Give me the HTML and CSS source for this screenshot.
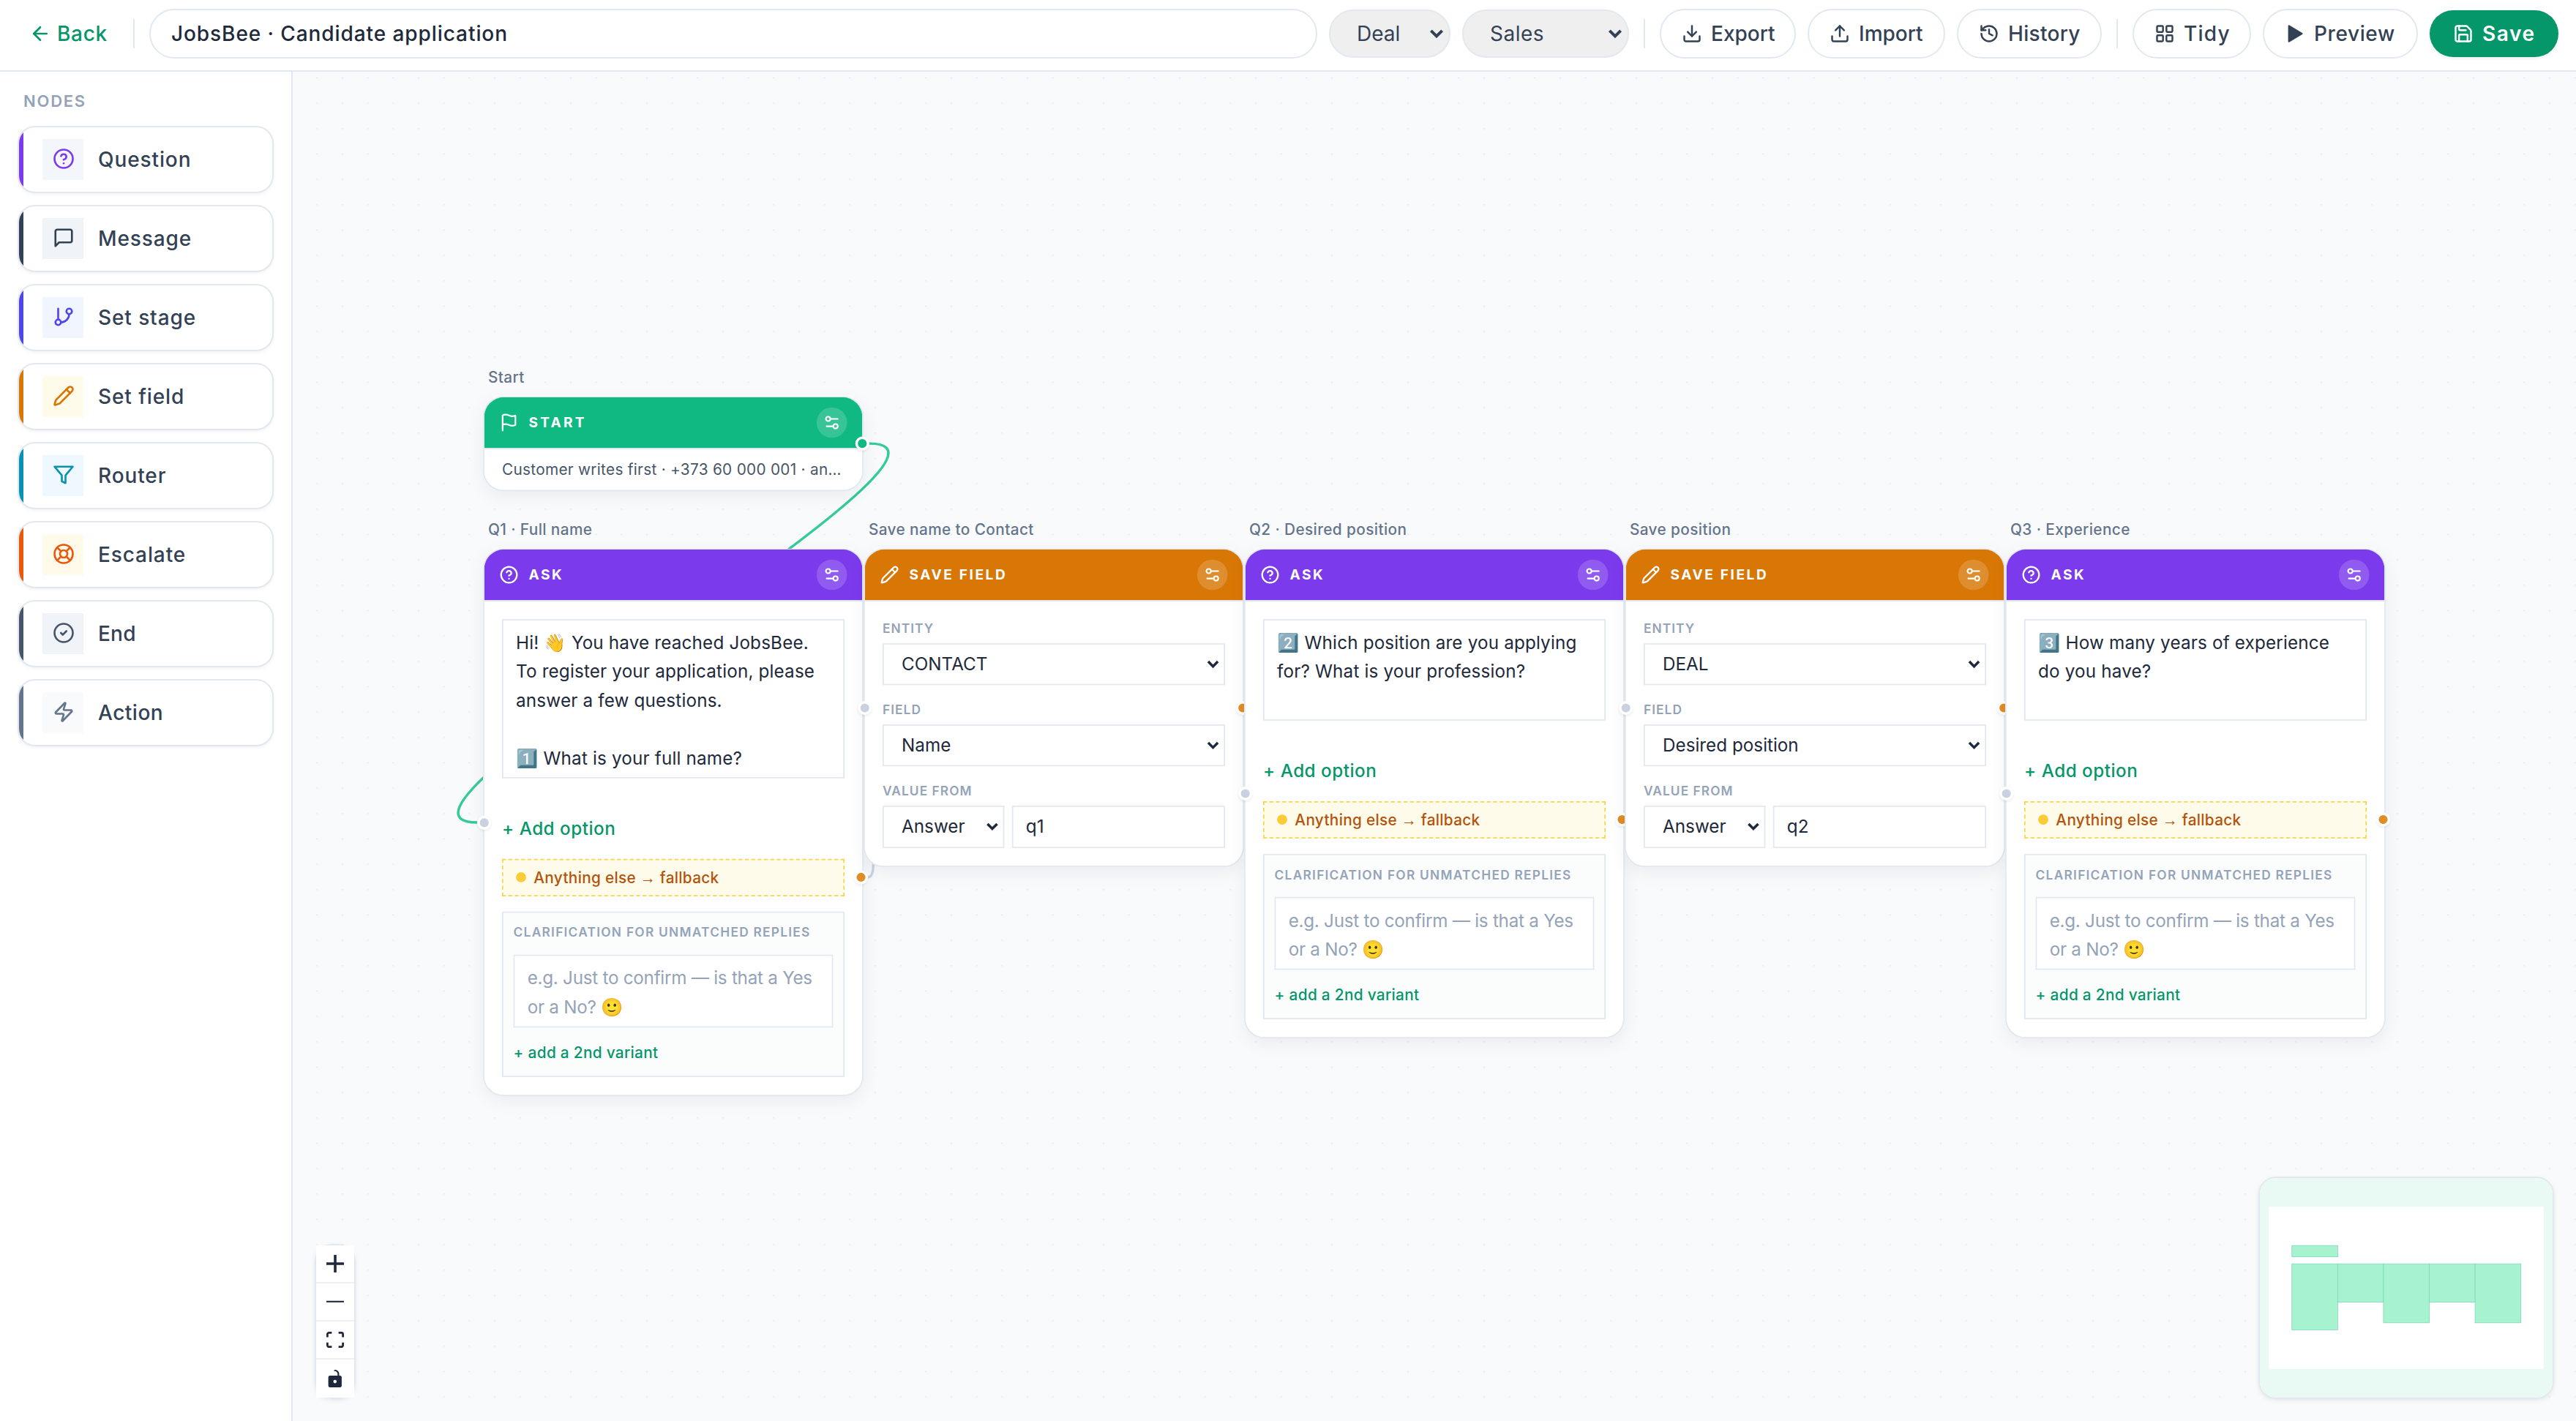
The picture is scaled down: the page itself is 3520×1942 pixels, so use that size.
FILE: index.html
```html
<!DOCTYPE html>
<html lang="en">
  <head>
    <meta charset="UTF-8" />
    <meta name="viewport" content="width=device-width, initial-scale=1.0" />
    <title>JobsBee · Candidate application</title>
    <link rel="stylesheet" href="styles.css">
  </head>
  <body>
    <svg class="sprite" aria-hidden="true">
      <symbol id="i-back" viewBox="0 0 24 24"><path d="m12 19-7-7 7-7"/><path d="M19 12H5"/></symbol>
      <symbol id="i-export" viewBox="0 0 24 24"><path d="M21 15v4a2 2 0 0 1-2 2H5a2 2 0 0 1-2-2v-4"/><path d="m7 10 5 5 5-5"/><path d="M12 15V3"/></symbol>
      <symbol id="i-import" viewBox="0 0 24 24"><path d="M21 15v4a2 2 0 0 1-2 2H5a2 2 0 0 1-2-2v-4"/><path d="m17 8-5-5-5 5"/><path d="M12 3v12"/></symbol>
      <symbol id="i-history" viewBox="0 0 24 24"><path d="M3 12a9 9 0 1 0 9-9 9.75 9.75 0 0 0-6.74 2.74L3 8"/><path d="M3 3v5h5"/><path d="M12 7v5l4 2"/></symbol>
      <symbol id="i-tidy" viewBox="0 0 24 24"><rect width="7" height="7" x="3" y="3" rx="1"/><rect width="7" height="7" x="14" y="3" rx="1"/><rect width="7" height="7" x="14" y="14" rx="1"/><rect width="7" height="7" x="3" y="14" rx="1"/></symbol>
      <symbol id="i-play" viewBox="0 0 24 24"><path d="M5 3l15 9-15 9z" fill="currentColor"/></symbol>
      <symbol id="i-save" viewBox="0 0 24 24"><path d="M15.2 3a2 2 0 0 1 1.4.6l3.8 3.8a2 2 0 0 1 .6 1.4V19a2 2 0 0 1-2 2H5a2 2 0 0 1-2-2V5a2 2 0 0 1 2-2z"/><path d="M17 21v-7a1 1 0 0 0-1-1H8a1 1 0 0 0-1 1v7"/><path d="M7 3v4a1 1 0 0 0 1 1h7"/></symbol>
      <symbol id="i-question" viewBox="0 0 24 24"><circle cx="12" cy="12" r="10"/><path d="M9.09 9a3 3 0 0 1 5.83 1c0 2-3 3-3 3"/><path d="M12 17h.01"/></symbol>
      <symbol id="i-message" viewBox="0 0 24 24"><path d="M21 15a2 2 0 0 1-2 2H7l-4 4V5a2 2 0 0 1 2-2h14a2 2 0 0 1 2 2z"/></symbol>
      <symbol id="i-stage" viewBox="0 0 24 24"><path d="M6 3v12"/><circle cx="18" cy="6" r="3"/><circle cx="6" cy="18" r="3"/><path d="M18 9a9 9 0 0 1-9 9"/></symbol>
      <symbol id="i-pencil" viewBox="0 0 24 24"><path d="M21.174 6.812a1 1 0 0 0-3.986-3.987L3.842 16.174a2 2 0 0 0-.5.83l-1.321 4.352a.5.5 0 0 0 .623.622l4.353-1.32a2 2 0 0 0 .83-.497z"/><path d="m15 5 4 4"/></symbol>
      <symbol id="i-router" viewBox="0 0 24 24"><path d="M22 3H2l8 9.46V19l4 2v-8.54z"/></symbol>
      <symbol id="i-escalate" viewBox="0 0 24 24"><circle cx="12" cy="12" r="10"/><path d="m4.93 4.93 4.24 4.24"/><path d="m14.83 9.17 4.24-4.24"/><path d="m14.83 14.83 4.24 4.24"/><path d="m9.17 14.83-4.24 4.24"/><circle cx="12" cy="12" r="4"/></symbol>
      <symbol id="i-end" viewBox="0 0 24 24"><circle cx="12" cy="12" r="10"/><path d="m9 12 2 2 4-4"/></symbol>
      <symbol id="i-action" viewBox="0 0 24 24"><path d="M4 14a1 1 0 0 1-.78-1.63l9.9-10.2a.5.5 0 0 1 .86.46l-1.92 6.02A1 1 0 0 0 13 10h7a1 1 0 0 1 .78 1.63l-9.9 10.2a.5.5 0 0 1-.86-.46l1.92-6.02A1 1 0 0 0 11 14z"/></symbol>
      <symbol id="i-flag" viewBox="0 0 24 24"><path d="M4 15s1-1 4-1 5 2 8 2 4-1 4-1V3s-1 1-4 1-5-2-8-2-4 1-4 1z"/><path d="M4 22v-7"/></symbol>
      <symbol id="i-tune" viewBox="0 0 24 24"><path d="M20 7h-9"/><path d="M14 17H5"/><circle cx="17" cy="17" r="3"/><circle cx="7" cy="7" r="3"/></symbol>
    </svg>

    <div class="app">
      <header class="topbar">
        <button class="back"><svg class="icon"><use href="#i-back"/></svg>Back</button>
        <span class="divider"></span>
        <input class="flow-name" type="text" value="JobsBee · Candidate application" />
        <select class="pick pick-entity"><option>Deal</option></select>
        <select class="pick pick-pipeline"><option>Sales</option></select>
        <span class="divider"></span>
        <button class="btn btn-export"><svg class="icon"><use href="#i-export"/></svg>Export</button>
        <button class="btn btn-import"><svg class="icon"><use href="#i-import"/></svg>Import</button>
        <button class="btn btn-history"><svg class="icon"><use href="#i-history"/></svg>History</button>
        <span class="divider"></span>
        <button class="btn btn-tidy"><svg class="icon"><use href="#i-tidy"/></svg>Tidy</button>
        <button class="btn btn-preview"><svg class="icon"><use href="#i-play"/></svg>Preview</button>
        <button class="btn btn-save"><svg class="icon"><use href="#i-save"/></svg>Save</button>
      </header>

      <main class="main">
        <aside class="sidebar">
          <h2 class="sidebar-title">Nodes</h2>
          <div class="palette">
            <div class="item question"><span class="item-icon"><svg class="icon"><use href="#i-question"/></svg></span>Question</div>
            <div class="item message"><span class="item-icon"><svg class="icon"><use href="#i-message"/></svg></span>Message</div>
            <div class="item stage"><span class="item-icon"><svg class="icon"><use href="#i-stage"/></svg></span>Set stage</div>
            <div class="item field"><span class="item-icon"><svg class="icon"><use href="#i-pencil"/></svg></span>Set field</div>
            <div class="item router"><span class="item-icon"><svg class="icon"><use href="#i-router"/></svg></span>Router</div>
            <div class="item escalate"><span class="item-icon"><svg class="icon"><use href="#i-escalate"/></svg></span>Escalate</div>
            <div class="item end"><span class="item-icon"><svg class="icon"><use href="#i-end"/></svg></span>End</div>
            <div class="item action"><span class="item-icon"><svg class="icon"><use href="#i-action"/></svg></span>Action</div>
          </div>
        </aside>

        <section class="canvas">
          <svg class="dots">
            <pattern id="dots" x="7.99" y="-4.49" width="17.3333" height="17.3333" patternUnits="userSpaceOnUse">
              <circle cx="8.67" cy="8.67" r="0.55" fill="#e2e7ee"/>
            </pattern>
            <rect width="100%" height="100%" fill="url(#dots)"/>
          </svg>

          <div class="viewport">
            <svg class="edges">
              <path class="edge" d="M303.4 379 C321 379 278 245 295.5 245"/>
              <path class="edge" d="M604.5 245 C623 245 577 313 595.5 313"/>
              <path class="edge" d="M903.4 333 C921 333 878 245 895.5 245"/>
              <path class="edge" d="M1204.5 245 C1223 245 1177 313 1195.5 313"/>
              <path class="edge edge-start" d="M304.5 37 C414.3 37 -114.3 335.75 -4.5 335.75"/>
            </svg>

            <article class="node node-start" style="left: 0; top: 0">
              <span class="node-name">Start</span>
              <div class="node-head"><svg class="icon"><use href="#i-flag"/></svg>Start<span class="tune"><svg class="icon"><use href="#i-tune"/></svg></span></div>
              <div class="node-summary">Customer writes first · +373 60 000 001 · an…</div>
              <i class="handle out"></i>
            </article>

            <article class="node node-ask" style="left: 0; top: 120px">
              <span class="node-name">Q1 · Full name</span>
              <div class="node-head"><svg class="icon"><use href="#i-question"/></svg>Ask<span class="tune"><svg class="icon"><use href="#i-tune"/></svg></span></div>
              <div class="node-body">
                <textarea class="text tall">Hi! 👋 You have reached JobsBee. To register your application, please answer a few questions.

1️⃣ What is your full name?</textarea>
                <button class="add-option">+ Add option</button>
                <div class="fallback"><i class="dot"></i><span>Anything else <span class="arrow">→</span> fallback</span><i class="handle"></i></div>
                <div class="clarify">
                  <span class="caption">Clarification for unmatched replies</span>
                  <textarea class="text short" placeholder="e.g. Just to confirm — is that a Yes or a No? 🙂"></textarea>
                  <button class="add-variant">+ add a 2nd variant</button>
                </div>
              </div>
              <i class="handle in"></i>
            </article>

            <article class="node node-save" style="left: 300px; top: 120px">
              <span class="node-name">Save name to Contact</span>
              <div class="node-head"><svg class="icon"><use href="#i-pencil"/></svg>Save field<span class="tune"><svg class="icon"><use href="#i-tune"/></svg></span></div>
              <div class="node-body">
                <label class="group"><span class="caption">Entity</span><select class="control"><option>CONTACT</option></select></label>
                <label class="group"><span class="caption">Field</span><select class="control"><option>Name</option></select></label>
                <div class="group">
                  <span class="caption">Value from</span>
                  <div class="pair"><select class="control source"><option>Answer</option></select><input class="control key" type="text" value="q1" /></div>
                </div>
              </div>
              <i class="handle in"></i>
              <i class="handle out"></i>
            </article>

            <article class="node node-ask" style="left: 600px; top: 120px">
              <span class="node-name">Q2 · Desired position</span>
              <div class="node-head"><svg class="icon"><use href="#i-question"/></svg>Ask<span class="tune"><svg class="icon"><use href="#i-tune"/></svg></span></div>
              <div class="node-body">
                <textarea class="text">2️⃣ Which position are you applying for? What is your profession?</textarea>
                <button class="add-option">+ Add option</button>
                <div class="fallback"><i class="dot"></i><span>Anything else <span class="arrow">→</span> fallback</span><i class="handle"></i></div>
                <div class="clarify">
                  <span class="caption">Clarification for unmatched replies</span>
                  <textarea class="text short" placeholder="e.g. Just to confirm — is that a Yes or a No? 🙂"></textarea>
                  <button class="add-variant">+ add a 2nd variant</button>
                </div>
              </div>
              <i class="handle in"></i>
            </article>

            <article class="node node-save" style="left: 900px; top: 120px">
              <span class="node-name">Save position</span>
              <div class="node-head"><svg class="icon"><use href="#i-pencil"/></svg>Save field<span class="tune"><svg class="icon"><use href="#i-tune"/></svg></span></div>
              <div class="node-body">
                <label class="group"><span class="caption">Entity</span><select class="control"><option>DEAL</option></select></label>
                <label class="group"><span class="caption">Field</span><select class="control"><option>Desired position</option></select></label>
                <div class="group">
                  <span class="caption">Value from</span>
                  <div class="pair"><select class="control source"><option>Answer</option></select><input class="control key" type="text" value="q2" /></div>
                </div>
              </div>
              <i class="handle in"></i>
              <i class="handle out"></i>
            </article>

            <article class="node node-ask" style="left: 1200px; top: 120px">
              <span class="node-name">Q3 · Experience</span>
              <div class="node-head"><svg class="icon"><use href="#i-question"/></svg>Ask<span class="tune"><svg class="icon"><use href="#i-tune"/></svg></span></div>
              <div class="node-body">
                <textarea class="text">3️⃣ How many years of experience do you have?</textarea>
                <button class="add-option">+ Add option</button>
                <div class="fallback"><i class="dot"></i><span>Anything else <span class="arrow">→</span> fallback</span><i class="handle"></i></div>
                <div class="clarify">
                  <span class="caption">Clarification for unmatched replies</span>
                  <textarea class="text short" placeholder="e.g. Just to confirm — is that a Yes or a No? 🙂"></textarea>
                  <button class="add-variant">+ add a 2nd variant</button>
                </div>
              </div>
              <i class="handle in"></i>
            </article>
          </div>

          <div class="controls">
            <button title="zoom in"><svg viewBox="0 0 32 32"><path d="M32 18.4H18.4V32h-4.8V18.4H0v-4.8h13.6V0h4.8v13.6H32z"/></svg></button>
            <button title="zoom out"><svg viewBox="0 0 32 5"><path d="M0 1h32v2.8H0z"/></svg></button>
            <button title="fit view"><svg viewBox="0 0 32 30"><path d="M3.692 4.63c0-.53.4-.938.939-.938h5.215V0H4.708C2.13 0 0 2.054 0 4.63v5.216h3.692V4.631zM27.354 0h-5.2v3.692h5.17c.53 0 .984.4.984.939v5.215H32V4.631A4.624 4.624 0 0027.354 0zm.954 24.83c0 .532-.4.94-.939.94h-5.215v3.768h5.215c2.577 0 4.631-2.13 4.631-4.707v-5.139h-3.692v5.139zm-23.677.94c-.531 0-.939-.4-.939-.94v-5.138H0v5.139c0 2.577 2.13 4.707 4.708 4.707h5.138V25.77H4.631z"/></svg></button>
            <button title="toggle interactivity"><svg viewBox="0 0 25 32"><path d="M21.333 10.667H19.81V7.619C19.81 3.429 16.38 0 12.19 0c-4.114 1.828-1.37 2.133.305 2.438 1.676.305 4.42 2.59 4.42 5.181v3.048H3.047A3.056 3.056 0 000 13.714v15.238A3.056 3.056 0 003.048 32h18.285a3.056 3.056 0 003.048-3.048V13.714a3.056 3.056 0 00-3.048-3.047zM12.19 24.533a3.056 3.056 0 01-3.047-3.047 3.056 3.056 0 013.047-3.048 3.056 3.056 0 013.048 3.048 3.056 3.056 0 01-3.048 3.047z"/></svg></button>
          </div>

          <div class="minimap">
            <svg viewBox="0 0 200 150">
              <g fill="#a7f3d0" stroke="#7dd8b8" stroke-width="0.4">
                <rect x="21.9" y="46.1" width="31.29" height="7.7"/>
                <rect x="21.9" y="58.6" width="31.29" height="45.1"/>
                <rect x="53.19" y="58.6" width="31.29" height="26.2"/>
                <rect x="84.48" y="58.6" width="31.29" height="40.3"/>
                <rect x="115.77" y="58.6" width="31.29" height="26.2"/>
                <rect x="147.06" y="58.6" width="31.29" height="40.3"/>
              </g>
              <path d="M0 0h200v150H0zM6.1 19.5v110.9h187.8V19.5z" fill="#e9f9f4" fill-rule="evenodd"/>
            </svg>
          </div>
        </section>
      </main>
    </div>
  </body>
</html>
```

FILE: styles.css
```css
* {
  box-sizing: border-box;
}
html {
  zoom: 2;
  height: 100%;
}
body {
  margin: 0;
  height: 100%;
  font-family: Inter, "Liberation Sans", sans-serif;
  font-size: 14px;
  color: #334155;
  overflow: hidden;
}
button,
input,
select,
textarea {
  font: inherit;
  color: inherit;
  letter-spacing: inherit;
  margin: 0;
}
button {
  border: none;
  background: none;
  padding: 0;
}
select {
  appearance: none;
  background-repeat: no-repeat;
  background-position: right 3.5px center;
  background-size: 10px 7px;
}
.sprite {
  position: absolute;
  width: 0;
  height: 0;
}
.icon {
  flex: none;
  width: 14px;
  height: 14px;
  fill: none;
  stroke: currentColor;
  stroke-width: 2.1;
  stroke-linecap: round;
  stroke-linejoin: round;
}
.app {
  height: 100%;
  display: flex;
  flex-direction: column;
}

/* Top bar */
.topbar {
  flex: none;
  height: 49px;
  display: flex;
  align-items: center;
  gap: 8px;
  padding: 6px 12px 8px;
  background: #fff;
  border-bottom: 1px solid #e2e8f0;
}
.back {
  display: flex;
  align-items: center;
  gap: 4px;
  width: 69px;
  height: 32px;
  padding-left: 8px;
  font-weight: 500;
  letter-spacing: 0.35px;
  color: #059669;
}
.back .icon {
  width: 15px;
  height: 15px;
}
.divider {
  flex: none;
  width: 1px;
  height: 20px;
  margin: 0 2px;
  background: #e2e8f0;
}
.flow-name {
  flex: 1;
  min-width: 0;
  height: 34px;
  padding: 0 14px;
  border: 1px solid #e2e8f0;
  border-radius: 999px;
  font-weight: 500;
  letter-spacing: 0.46px;
  color: #1e293b;
  background: #fff;
}
.pick {
  flex: none;
  height: 33px;
  padding: 0 0 0 18px;
  border: 1px solid #e2e8f0;
  border-radius: 999px;
  background-color: #efefef;
  background-image: url("data:image/svg+xml,%3Csvg xmlns='http://www.w3.org/2000/svg' viewBox='0 0 10 7'%3E%3Cpath d='M1.2 1.4 5 5.2 8.8 1.4' fill='none' stroke='%23334155' stroke-width='2'/%3E%3C/svg%3E");
}
.pick-entity {
  width: 83px;
}
.pick-pipeline {
  width: 114px;
  letter-spacing: 0.25px;
}
.btn {
  flex: none;
  display: flex;
  align-items: center;
  gap: 6px;
  height: 34px;
  padding: 0 0 0 14px;
  border: 1px solid #e2e8f0;
  border-radius: 999px;
  font-weight: 500;
  white-space: nowrap;
}
.btn-export {
  width: 93px;
}
.btn-import {
  width: 94px;
}
.btn-history {
  width: 99px;
  letter-spacing: 0.15px;
}
.btn-tidy {
  width: 81px;
  letter-spacing: 0.6px;
}
.btn-preview {
  width: 106px;
  letter-spacing: 0.3px;
}
.btn-save {
  width: 88px;
  height: 32px;
  padding-left: 16px;
  border: none;
  background: #059669;
  color: #fff;
  font-weight: 600;
  letter-spacing: 0.8px;
  box-shadow: 0 1px 2px rgba(15, 23, 42, 0.08);
}

/* Sidebar */
.main {
  flex: 1;
  min-height: 0;
  display: flex;
}
.sidebar {
  flex: none;
  width: 200px;
  padding: 11.5px 12px 12px;
  background: #fff;
  border-right: 1px solid #e2e8f0;
}
.sidebar-title {
  margin: 0 0 8.5px;
  padding-left: 4px;
  font-size: 11px;
  line-height: 17px;
  font-weight: 600;
  letter-spacing: 0.08em;
  text-transform: uppercase;
  color: #94a3b8;
}
.palette {
  display: flex;
  flex-direction: column;
  gap: 8px;
}
.item {
  display: flex;
  align-items: center;
  gap: 10px;
  height: 46px;
  padding-left: 13px;
  border: 1px solid #e2e8f0;
  border-radius: 12px;
  overflow: hidden;
  font-weight: 500;
  letter-spacing: 0.45px;
  background: #fff;
  box-shadow: 0 1px 2px rgba(15, 23, 42, 0.05);
}
.item::before {
  content: "";
  align-self: stretch;
  width: 3px;
  margin: 0 0 0 -13px;
  background: currentColor;
}
.item-icon {
  display: flex;
  align-items: center;
  justify-content: center;
  width: 28px;
  height: 28px;
  margin-left: 3px;
  padding: 0 0 1px 1px;
}
.item-icon .icon {
  width: 15px;
  height: 15px;
}
.question::before { background: #7c3aed; }
.message::before { background: #334155; }
.stage::before { background: #4f46e5; }
.field::before { background: #d97706; }
.router::before { background: #0891b2; }
.escalate::before { background: #ea580c; }
.end::before { background: #475569; }
.action::before { background: #64748b; }
.end { letter-spacing: 0.1px; }
.action { letter-spacing: 0.25px; }
.question .item-icon { color: #7c3aed; background: #f3f7fc; }
.message .item-icon { color: #334155; background: #f0f4f8; }
.stage .item-icon { color: #4f46e5; background: #f0f5ff; }
.field .item-icon { color: #d97706; background: #fffbeb; }
.router .item-icon { color: #0891b2; background: #eff8ff; }
.escalate .item-icon { color: #ea580c; background: #fffaea; }
.end .item-icon { color: #475569; background: #f0f4f8; }
.action .item-icon { color: #64748b; background: #f8fafc; }

/* Canvas */
.canvas {
  position: relative;
  flex: 1;
  overflow: hidden;
  background: #f8fafc;
}
.dots {
  position: absolute;
  inset: 0;
  width: 100%;
  height: 100%;
}
.viewport {
  position: absolute;
  left: 0;
  top: 0;
  transform-origin: 0 0;
  transform: translate(130px, 222px) scale(0.866667);
}
.edges {
  position: absolute;
  width: 1px;
  height: 1px;
  overflow: visible;
}
.edge {
  fill: none;
  stroke: #cbd5e1;
  stroke-width: 2;
}
.edge-start {
  stroke: #34cb97;
}
.node {
  position: absolute;
  width: 300px;
  border: 1px solid #e2e8f0;
  border-radius: 16px;
  background: #fff;
  box-shadow: 0 4px 14px rgba(15, 23, 42, 0.06);
}
.node-name {
  position: absolute;
  left: 3px;
  top: -25px;
  font-size: 12px;
  line-height: 18px;
  font-weight: 500;
  letter-spacing: 0.22px;
  color: #64748b;
  white-space: nowrap;
}
.node-head {
  display: flex;
  align-items: center;
  gap: 8px;
  height: 41px;
  margin-top: -0.75px;
  padding: 0.75px 12px 0;
  border-bottom: 1px solid #e2e8f0;
  border-radius: 15.5px 15.5px 0 0;
  background-clip: padding-box;
  font-size: 11px;
  font-weight: 700;
  letter-spacing: 1.5px;
  text-transform: uppercase;
  color: #fff;
}
.node-head > .icon {
  width: 15px;
  height: 15px;
}
.node-start .node-head { background-color: #10b981; letter-spacing: 1.9px; }
.node-ask .node-head { background-color: #7c3aed; }
.node-save .node-head { background-color: #d97706; }
.tune {
  display: flex;
  align-items: center;
  justify-content: center;
  width: 24px;
  height: 24px;
  margin-left: auto;
  border-radius: 50%;
  background: rgba(255, 255, 255, 0.17);
}
.node-summary {
  padding: 7px 0 7px 14px;
  font-size: 12px;
  line-height: 18px;
  letter-spacing: 0.16px;
  color: #475569;
  white-space: nowrap;
}
.node-body {
  display: flex;
  flex-direction: column;
  gap: 12px;
  padding: 14px;
}
.text {
  display: block;
  width: 100%;
  height: 80.25px;
  padding: 6.5px 9px 0 10px;
  border: 1px solid #e2e8f0;
  border-radius: 0;
  background: #fff;
  color: #1e293b;
  line-height: 22.75px;
  letter-spacing: 0.09px;
  resize: none;
  overflow: hidden;
}
.text.tall {
  height: 125.75px;
}
.text.short {
  height: 57.5px;
  letter-spacing: -0.16px;
}
.text::placeholder {
  color: #94a3b8;
}
.add-option {
  align-self: flex-start;
  margin-top: 16.5px;
  line-height: 22.75px;
  font-weight: 500;
  letter-spacing: 0.28px;
  color: #059669;
}
.fallback {
  position: relative;
  display: flex;
  align-items: center;
  gap: 6px;
  height: 29.75px;
  padding: 0 10px;
  border: 1px dashed #fcd34d;
  background: #fffbeb;
  font-size: 12px;
  font-weight: 500;
  letter-spacing: 0.17px;
  color: #b45309;
}
.arrow {
  font-family: "Liberation Sans", sans-serif;
  font-weight: 400;
  line-height: 1;
}
.dot {
  width: 8px;
  height: 8px;
  border-radius: 50%;
  background: #fbcb38;
}
.clarify {
  display: flex;
  flex-direction: column;
  align-items: flex-start;
  gap: 10px;
  padding: 8px;
  border: 1px solid #e2e8f0;
  background: #fbfdfd;
}
.caption {
  font-size: 10px;
  line-height: 15px;
  font-weight: 600;
  letter-spacing: 0.6px;
  text-transform: uppercase;
  color: #94a3b8;
}
.clarify .caption {
  letter-spacing: 0.72px;
}
.add-variant {
  font-size: 12px;
  line-height: 20px;
  font-weight: 500;
  letter-spacing: 0.17px;
  color: #059669;
}
.group {
  display: flex;
  flex-direction: column;
  gap: 4px;
}
.control {
  width: 100%;
  height: 33px;
  padding: 0 0 0 10px;
  border: 1px solid #e2e8f0;
  border-radius: 0;
  background-color: #fff;
  color: #1e293b;
}
select.control {
  padding-left: 14px;
  background-image: url("data:image/svg+xml,%3Csvg xmlns='http://www.w3.org/2000/svg' viewBox='0 0 10 7'%3E%3Cpath d='M1.2 1.4 5 5.2 8.8 1.4' fill='none' stroke='%231e293b' stroke-width='2'/%3E%3C/svg%3E");
}
.pair {
  display: flex;
  gap: 6px;
}
.pair .control {
  height: 33.75px;
}
.pair .source {
  flex: none;
  width: 96px;
}
.handle {
  position: absolute;
  top: 50%;
  width: 11px;
  height: 11px;
  margin-top: -5.5px;
  border: 2px solid #fff;
  border-radius: 50%;
  background: #cbd1e0;
  box-shadow: 0 1px 2px rgba(15, 23, 42, 0.08);
}
.handle.in {
  left: -5.5px;
}
.handle.out {
  right: -5.5px;
  background: #e08d26;
}
.node-start .handle.out {
  background: #10b981;
}
.fallback .handle {
  right: -19.5px;
  background: #e08d26;
}

/* Zoom controls and minimap */
.controls {
  position: absolute;
  left: 15px;
  bottom: 15px;
  border: 1px solid #e2e8f0;
  border-radius: 12px;
  box-shadow: 0 1px 3px rgba(15, 23, 42, 0.08);
}
.controls button {
  display: flex;
  align-items: center;
  justify-content: center;
  width: 26px;
  height: 26px;
  background: #fff;
  border-bottom: 1px solid #edf1f6;
}
.controls button:last-child {
  border-bottom: none;
}
.controls svg {
  width: 12px;
  max-height: 12px;
  fill: #1e293b;
}
.minimap {
  position: absolute;
  right: 15px;
  bottom: 15px;
  width: 202px;
  height: 152px;
  border: 1px solid #e2e8f0;
  border-radius: 12px;
  overflow: hidden;
  background: #fff;
  box-shadow: 0 1px 3px rgba(15, 23, 42, 0.08);
}
.minimap svg {
  display: block;
  width: 200px;
  height: 150px;
}
```
